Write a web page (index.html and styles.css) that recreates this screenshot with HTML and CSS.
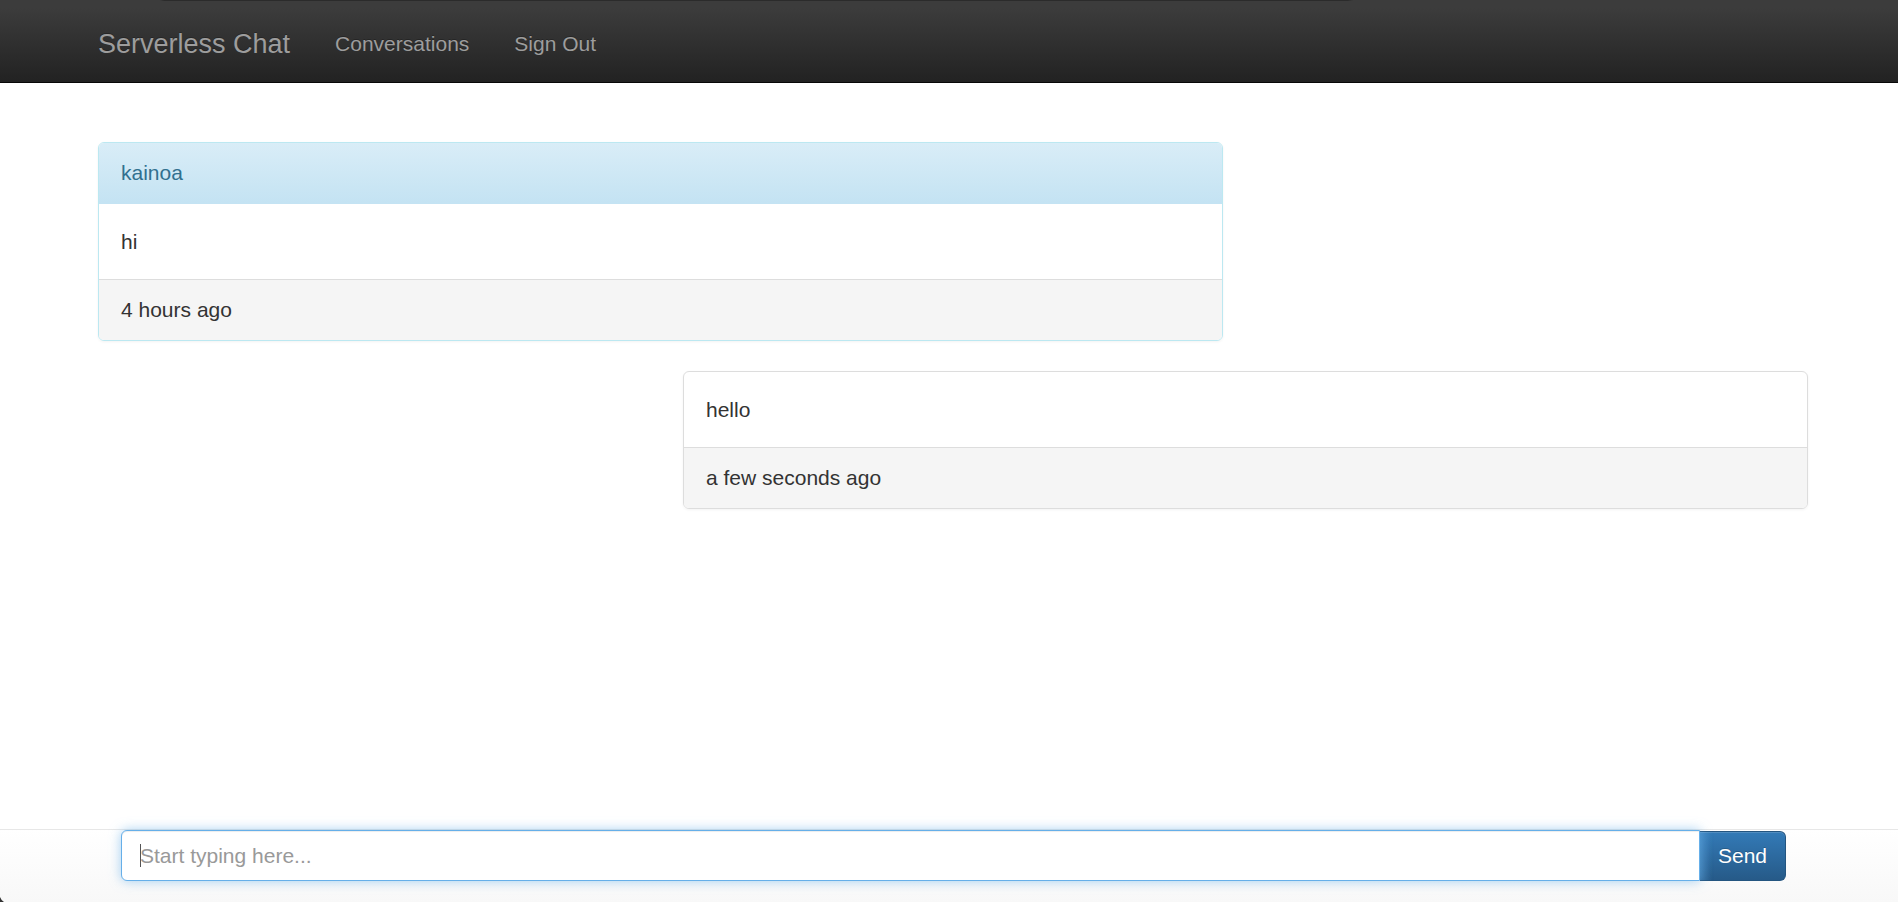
FILE: index.html
```html
<!DOCTYPE html>
<html lang="en">
<head>
  <meta charset="utf-8">
  <meta name="viewport" content="width=device-width, initial-scale=1">
  <title>Serverless Chat</title>
  <link rel="stylesheet" href="styles.css">
</head>
<body>
  <div class="edge"></div>
  <nav class="navbar">
    <a class="brand" href="#">Serverless Chat</a>
    <a class="nav-link" href="#">Conversations</a>
    <a class="nav-link" href="#">Sign Out</a>
  </nav>

  <main class="messages">
    <article class="panel panel-received">
      <header class="panel-heading">kainoa</header>
      <p class="panel-body">hi</p>
      <footer class="panel-footer">4 hours ago</footer>
    </article>
    <article class="panel panel-sent">
      <p class="panel-body">hello</p>
      <footer class="panel-footer">a few seconds ago</footer>
    </article>
  </main>

  <form class="composer">
    <div class="composer-field">
      <input class="composer-input" type="text" aria-label="Message" placeholder="Start typing here..." autofocus>
      <span class="caret" aria-hidden="true"></span>
    </div>
    <button class="composer-send" type="button">Send</button>
  </form>
  <svg class="corner" width="4" height="5" viewBox="0 0 4 5" aria-hidden="true"><path d="M0 0Q1 3 4 5H0Z" fill="#333"/></svg>
</body>
</html>
```
FILE: styles.css
```css
* {
  box-sizing: border-box;
}

body {
  display: flex;
  flex-direction: column;
  min-height: 100vh;
  margin: 0;
  background: #fff;
  color: #333;
  font: 21px/30px "Liberation Sans", Arial, sans-serif;
}

.edge {
  height: 8px;
  background: linear-gradient(90deg, transparent 160px, #2b2b2b 164px, #2b2b2b 71%, transparent 71.3%) top / 100% 1px no-repeat #3c3c3c;
}

.navbar {
  display: flex;
  align-items: center;
  gap: 45px;
  height: 75px;
  padding: 0 90px 2px 98px;
  border-bottom: 1px solid #080808;
  background: linear-gradient(#3c3c3c, #222);
}

.brand,
.nav-link {
  color: #9d9d9d;
  text-decoration: none;
  text-shadow: 0 -1px 0 rgba(0, 0, 0, .25);
}

.brand {
  font-size: 27px;
}

.messages {
  flex: 1;
  display: grid;
  grid-template-columns: repeat(12, 1fr);
  align-content: start;
  gap: 30px 45px;
  padding: 59px 90px 30px 98px;
}

.panel {
  overflow: hidden;
  border: 1px solid #ddd;
  border-radius: 6px;
  box-shadow: 0 1px 3px rgba(0, 0, 0, .05);
}

.panel-received {
  grid-column: 1 / span 8;
  border-color: #bce8f1;
}

.panel-sent {
  grid-column: 5 / span 8;
}

.panel-heading {
  padding: 15px 22px;
  border-bottom: 1px solid #c4e3f3;
  background: linear-gradient(#d9edf7, #c4e3f3);
  color: #31708f;
}

.panel-body {
  margin: 0;
  padding: 23px 22px 22px;
}

.panel-footer {
  padding: 15px 22px;
  border-top: 1px solid #ddd;
  background: #f5f5f5;
}

.composer {
  display: flex;
  height: 73px;
  padding: 0 112px 21px 121px;
  border-top: 1px solid #e7e7e7;
  background: linear-gradient(#fff, #f8f8f8);
}

.composer-field {
  position: relative;
  display: flex;
  flex: 1;
}

.composer-input {
  flex: 1;
  min-width: 0;
  padding: 9px 18px;
  border: 1px solid #66afe9;
  border-radius: 6px 0 0 6px;
  outline: 0;
  background: #fff;
  box-shadow: inset 0 1px 1px rgba(0, 0, 0, .075), 0 0 12px rgba(102, 175, 233, .6);
  color: #555;
  caret-color: transparent;
  font: inherit;
}

.composer-input::placeholder {
  color: #999;
}

/* Insertion point of the focused, empty field */
.caret {
  position: absolute;
  top: 14px;
  left: 19px;
  display: none;
  width: 1px;
  height: 23px;
  background: #555;
  pointer-events: none;
}

.composer-input:placeholder-shown + .caret {
  display: block;
}

.composer-send {
  margin-top: 1px;
  padding: 0 18px 1px;
  border: 1px solid #245580;
  border-left: 0;
  border-radius: 0 6px 6px 0;
  background: linear-gradient(90deg, rgba(102, 175, 233, .3), transparent 12px), linear-gradient(#337ab7, #265a88);
  box-shadow: inset 0 1px 0 rgba(255, 255, 255, .15);
  color: #fff;
  font: inherit;
  text-shadow: 0 -1px 0 rgba(0, 0, 0, .2);
}

/* Rounded window corner */
.corner {
  position: fixed;
  bottom: 0;
  left: 0;
}
```
